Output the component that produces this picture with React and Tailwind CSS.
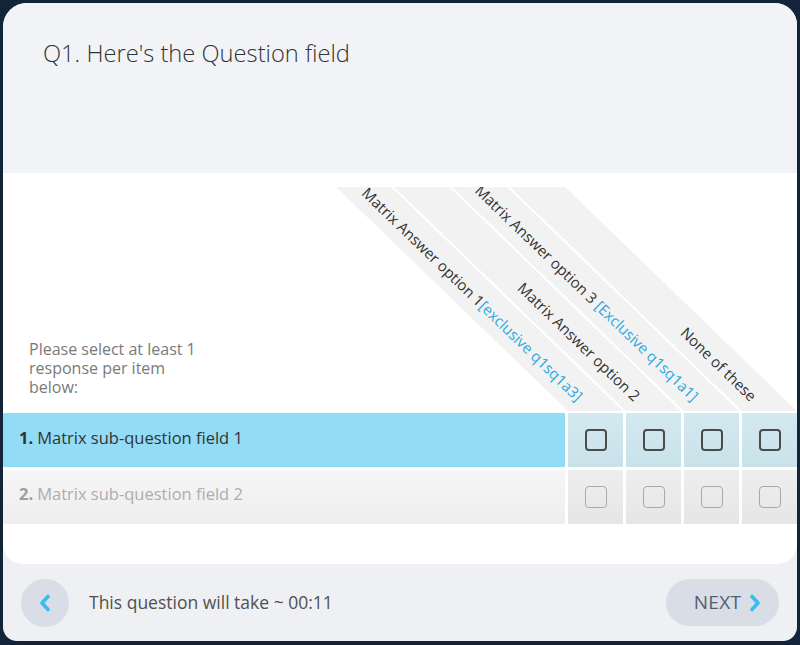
import React from "react";

const columns = [
  { label: "Matrix Answer option 1", tag: "[exclusive q1sq1a3]" },
  { label: "Matrix Answer option 2", tag: "" },
  { label: "Matrix Answer option 3 ", tag: "[Exclusive q1sq1a1]" },
  { label: "None of these", tag: "" },
];

const rows = [
  { num: "1.", text: "Matrix sub-question field 1", active: true },
  { num: "2.", text: "Matrix sub-question field 2", active: false },
];

const Checkbox = ({ active }) => (
  <div
    className={
      active
        ? "w-[22px] h-[22px] rounded-[4px] border-2 border-[#4b4b4b]"
        : "w-[22px] h-[22px] rounded-[4px] border-[1.5px] border-[#a9a9a9]"
    }
  />
);

const Chevron = ({ dir }) => (
  <svg width="12" height="18" viewBox="0 0 12 18">
    <polyline
      points={dir === "left" ? "9,2.5 3,9 9,15.5" : "3,2.5 9,9 3,15.5"}
      fill="none"
      stroke="#38bdf0"
      strokeWidth="3.6"
      strokeLinecap="round"
      strokeLinejoin="round"
    />
  </svg>
);

export default function App() {
  return (
    <div className="h-[645px] bg-[#13243a] pt-[3px] px-[3px] pb-[4px] font-['Open_Sans',sans-serif]">
      <div className="h-full flex flex-col bg-[#eef0f4] rounded-tl-[24px] rounded-tr-[22px] rounded-b-[14px] overflow-hidden">
        {/* question */}
        <div className="h-[170px] bg-[#f2f3f7] pl-[40px] pt-[33px]">
          <h1 className="text-[23.7px] font-light text-[#333]">
            Q1. Here's the Question field
          </h1>
        </div>

        {/* matrix */}
        <div className="bg-white rounded-b-[20px] pt-[14px] pb-[40px]">
          <div className="relative h-[224px] flex gap-[3px] overflow-hidden">
            <div className="flex-1 flex items-end pl-[26px] pb-[14px]">
              <p className="w-[178px] text-[16px] leading-[19px] text-[#7a7a7a]">
                Please select at least 1 response per item below:
              </p>
            </div>
            {columns.map((c) => (
              <div key={c.label} className="relative w-[55px] h-full">
                <div className="absolute inset-0 bg-[#f2f2f2] origin-bottom skew-x-[46deg]" />
                <div className="absolute right-[43px] bottom-[2px] leading-[22px] whitespace-nowrap text-[15px] text-[#333] origin-right rotate-[44deg]">
                  {c.label}
                  {c.tag && <span className="text-[#2aa8e0]">{c.tag}</span>}
                </div>
              </div>
            ))}
          </div>

          <div className="mt-[2px] flex flex-col gap-[3px]">
            {rows.map((r) => (
              <div key={r.num} className="flex gap-[3px] h-[54px]">
                <div
                  className={
                    r.active
                      ? "flex-1 flex items-center pl-[16px] pb-[3px] bg-[#93dcf5] text-[16.5px] text-[#333]"
                      : "flex-1 flex items-center pl-[16px] pb-[5px] bg-gradient-to-b from-[#f6f6f6] to-[#eeeeee] text-[16.5px] text-[#adadad]"
                  }
                >
                  <span className={r.active ? "font-bold mr-[4px] text-[#333]" : "font-bold mr-[4px] text-[#9d9d9d]"}>
                    {r.num}
                  </span>
                  {r.text}
                </div>
                {columns.map((c) => (
                  <div
                    key={c.label}
                    className={
                      r.active
                        ? "w-[55px] flex items-center justify-center bg-gradient-to-b from-[#d3e9f0] to-[#c9e2ea]"
                        : "w-[55px] flex items-center justify-center bg-gradient-to-b from-[#eeeeee] to-[#e6e6e6]"
                    }
                  >
                    <Checkbox active={r.active} />
                  </div>
                ))}
              </div>
            ))}
          </div>
        </div>

        {/* footer */}
        <div className="flex-1 flex items-center justify-between pl-[18px] pr-[18px]">
          <div className="flex items-center">
            <button className="w-[48px] h-[48px] rounded-full bg-[#d8dde6] flex items-center justify-center">
              <Chevron dir="left" />
            </button>
            <span className="ml-[20px] text-[17.5px] text-[#505050]">
              This question will take ~ 00:11
            </span>
          </div>
          <button className="w-[113px] h-[47px] rounded-full bg-[#d8dde6] flex items-center justify-center gap-[8px] pl-[10px]">
            <span className="text-[19px] text-[#535d70] tracking-[0.3px]">NEXT</span>
            <Chevron dir="right" />
          </button>
        </div>
      </div>
    </div>
  );
}
